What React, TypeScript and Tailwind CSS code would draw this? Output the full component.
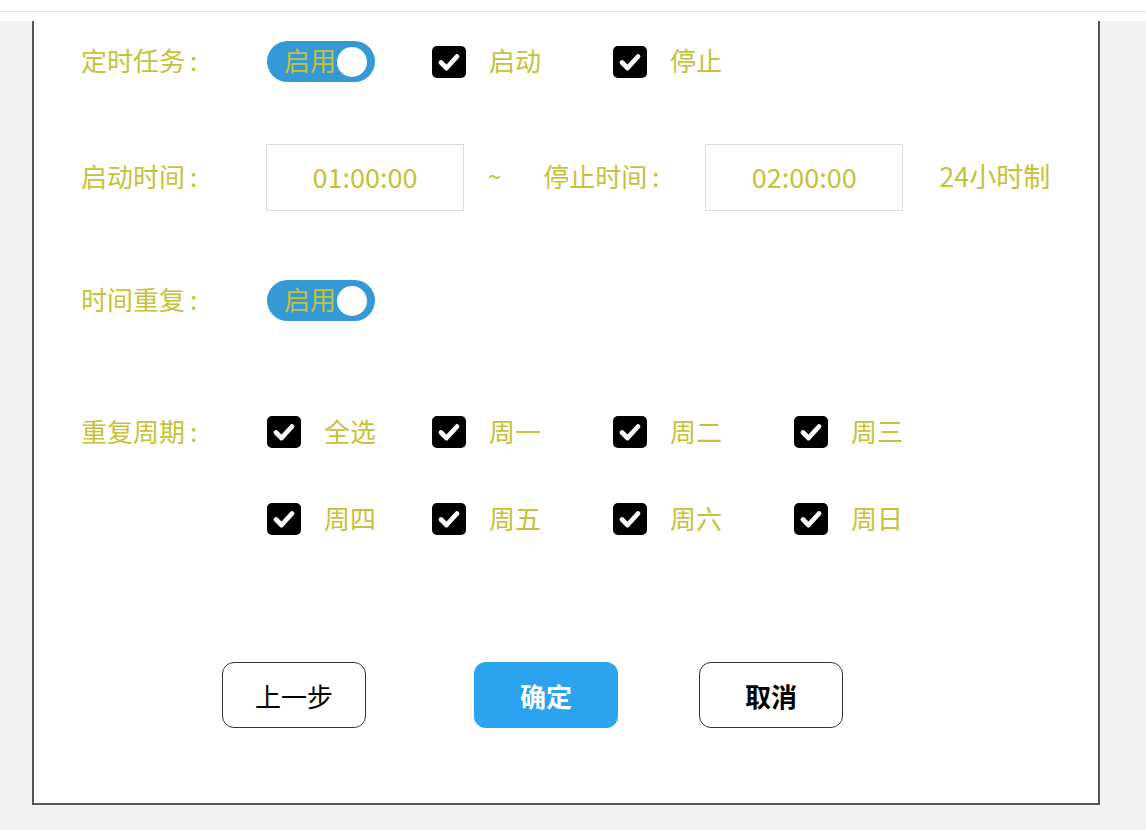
import React from 'react';

const font = { fontFamily: '"Noto Sans CJK SC", "Noto Sans", sans-serif' };

function Toggle() {
  return (
    <div className="flex h-[41px] w-[108px] items-center rounded-full bg-[#3499d4] pl-[17px] pr-[8px]">
      <span className="pb-[3px] text-[26px] leading-none text-[#c4c238]">启用</span>
      <span className="ml-auto h-[30px] w-[30px] rounded-full bg-white" />
    </div>
  );
}

function Check({ label }: { label: string }) {
  return (
    <div className="flex items-center">
      <svg width="34" height="32" viewBox="0 0 34 32" className="shrink-0">
        <rect x="0" y="0" width="34" height="32" rx="5" fill="#000" />
        <path d="M9 16.5 L14.5 22 L25 10.5" stroke="#fff" strokeWidth="4.8" fill="none" strokeLinecap="round" strokeLinejoin="round" />
      </svg>
      <span className="ml-[23px] pb-[3px] text-[26px] leading-none text-[#c4c238]">{label}</span>
    </div>
  );
}

function Label({ text }: { text: string }) {
  return (
    <div className="w-[186px] shrink-0 pb-[3px] text-[26px] leading-none text-[#c4c238]">
      {text}
      <span className="ml-[5px]">:</span>
    </div>
  );
}

function TimeBox({ value }: { value: string }) {
  return (
    <div className="flex h-[67px] w-[198px] items-center justify-center border border-[#dcdcdc] text-[27px] text-[#c4c238]">
      {value}
    </div>
  );
}

export default function App() {
  return (
    <div className="min-h-screen bg-[#f1f1f1]" style={font}>
      <div className="h-[12px] border-b border-[#efe2d0] bg-white" />
      <div className="h-[9px] bg-white" />
      <div className="px-[32px]">
        <div className="flex w-[1068px] flex-col border-x-2 border-b-2 border-[#555] bg-white pb-[75px] pl-[47px] pt-[20px]">
          {/* 定时任务 */}
          <div className="flex h-[41px] items-center">
            <Label text="定时任务" />
            <div className="grid grid-cols-[165px_181px_181px]">
              <Toggle />
              <Check label="启动" />
              <Check label="停止" />
            </div>
          </div>

          {/* 启动时间 */}
          <div className="mt-[62px] flex h-[66px] items-center">
            <div className="w-[185px] shrink-0 pb-[3px] text-[26px] leading-none text-[#c4c238]">
              启动时间<span className="ml-[5px]">:</span>
            </div>
            <TimeBox value="01:00:00" />
            <span className="ml-[24px] pb-[3px] text-[24px] text-[#c4c238]">~</span>
            <span className="ml-[42px] w-[162px] pb-[3px] text-[26px] leading-none text-[#c4c238]">
              停止时间<span className="ml-[5px]">:</span>
            </span>
            <TimeBox value="02:00:00" />
            <span className="ml-[36px] pb-[3px] text-[27px] leading-none text-[#c4c238]">24小时制</span>
          </div>

          {/* 时间重复 */}
          <div className="mt-[70px] flex h-[41px] items-center">
            <Label text="时间重复" />
            <Toggle />
          </div>

          {/* 重复周期 */}
          <div className="mt-[95px] flex">
            <div className="flex h-[32px] items-center">
              <Label text="重复周期" />
            </div>
            <div className="grid grid-cols-[165px_181px_181px_auto] gap-y-[55px]">
              <Check label="全选" />
              <Check label="周一" />
              <Check label="周二" />
              <Check label="周三" />
              <Check label="周四" />
              <Check label="周五" />
              <Check label="周六" />
              <Check label="周日" />
            </div>
          </div>

          {/* 按钮 */}
          <div className="ml-[141px] mt-[127px] flex">
            <button className="h-[66px] w-[144px] rounded-[12px] border border-[#333] bg-white text-[26px] text-black">上一步</button>
            <button className="ml-[108px] h-[66px] w-[144px] rounded-[12px] bg-[#2ba3ee] text-[26px] font-bold text-white">确定</button>
            <button className="ml-[81px] h-[66px] w-[144px] rounded-[12px] border border-[#333] bg-white text-[26px] font-bold text-black">取消</button>
          </div>
        </div>
      </div>
    </div>
  );
}
